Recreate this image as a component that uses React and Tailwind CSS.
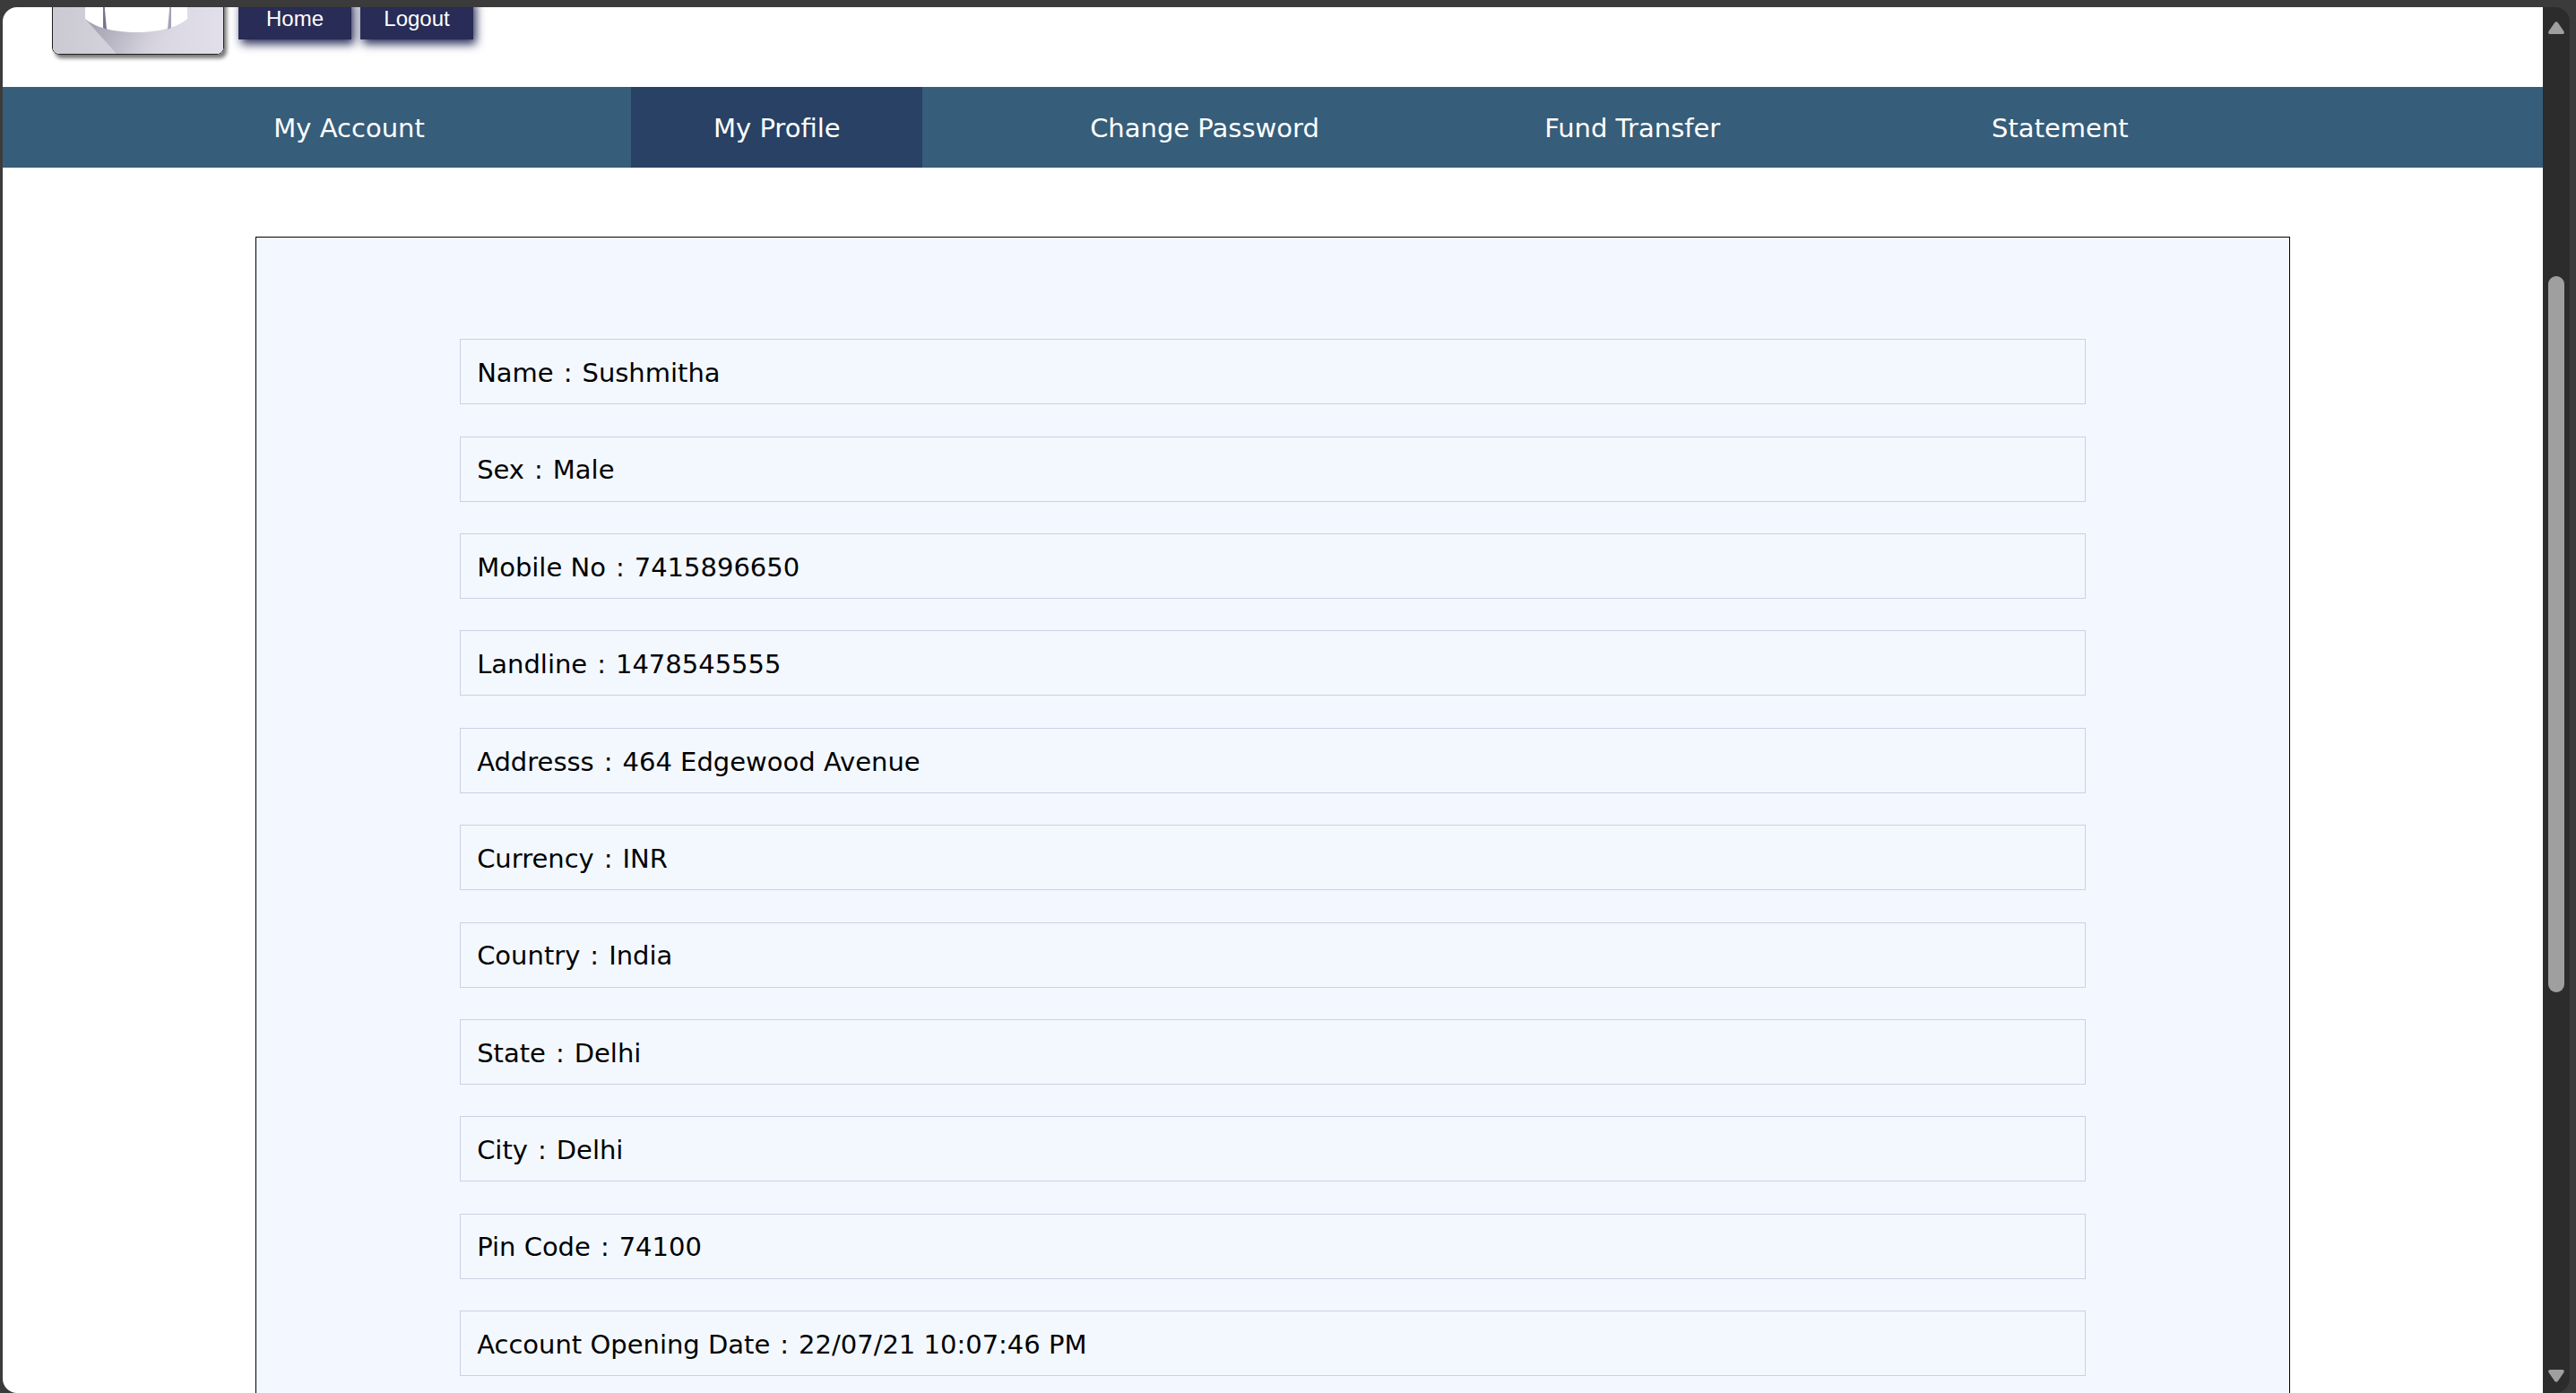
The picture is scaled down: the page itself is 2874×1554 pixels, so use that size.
const fields = [
  ["Name", "Sushmitha"],
  ["Sex", "Male"],
  ["Mobile No", "7415896650"],
  ["Landline", "1478545555"],
  ["Addresss", "464 Edgewood Avenue"],
  ["Currency", "INR"],
  ["Country", "India"],
  ["State", "Delhi"],
  ["City", "Delhi"],
  ["Pin Code", "74100"],
  ["Account Opening Date", "22/07/21 10:07:46 PM"],
];

const tabs = ["My Account", "My Profile", "Change Password", "Fund Transfer", "Statement"];

function Avatar() {
  return (
    <svg className="block h-[190px] w-full" viewBox="0 0 190 190" aria-hidden="true">
      <defs>
        <linearGradient id="back" x1="0" x2="1" y1="0" y2="0">
          <stop offset="0" stopColor="#cbcad3" />
          <stop offset="1" stopColor="#e2dfeb" />
        </linearGradient>
        <linearGradient id="shade" gradientUnits="userSpaceOnUse" x1="45" y1="150" x2="125" y2="195">
          <stop offset="0" stopColor="#a3a1b0" />
          <stop offset="0.5" stopColor="#c4c1ce" />
          <stop offset="1" stopColor="#dad7e3" stopOpacity="0" />
        </linearGradient>
      </defs>
      <rect width="190" height="190" fill="url(#back)" />
      <path d="M36 151 L71 190 H190 V130 H150 Z" fill="url(#shade)" />
      <path d="M36 110 V151 C58 171 128 171 150 151 V110 Z" fill="#ffffff" />
      <path d="M56 130 L56 161 L60 163 L57 130 Z" fill="#77748f" />
      <path d="M132 130 L132 161 L128 163 L131 130 Z" fill="#a5a2bb" />
    </svg>
  );
}

function HeaderButton({ children }) {
  return (
    <button className="h-[46px] w-[126px] bg-[#282c57] font-['Liberation_Sans',sans-serif] text-2xl text-white shadow-[3px_5px_10px_#282c57]">
      {children}
    </button>
  );
}

function Scrollbar() {
  return (
    <div className="flex w-[30px] shrink-0 flex-col items-center rounded-r-2xl bg-[#2c2c2c] pt-4 pb-3">
      <svg className="h-[14px] w-[18px]" viewBox="0 0 18 14" aria-hidden="true">
        <path d="M7 1.5Q9 -1 11 1.5L17.5 11Q18.5 14 16 14H2Q-0.5 14 0.5 11Z" fill="#9f9f9f" />
      </svg>
      <div className="flex w-full flex-1 flex-col items-center pt-[270px]">
        <div className="h-[65.5%] w-[18px] rounded-full bg-[#9f9f9f]" />
      </div>
      <svg className="h-[14px] w-[18px]" viewBox="0 0 18 14" aria-hidden="true">
        <path d="M7 12.5Q9 15 11 12.5L17.5 3Q18.5 0 16 0H2Q-0.5 0 0.5 3Z" fill="#9f9f9f" />
      </svg>
    </div>
  );
}

export default function App() {
  return (
    <div className="flex h-screen overflow-hidden bg-[#3b3b3b] pt-2 pr-[7px] pl-[3px] font-['DejaVu_Sans',sans-serif] text-[29px]">
      <div className="min-w-0 flex-1 overflow-hidden rounded-l-2xl bg-white">
        <header className="flex h-[89px] items-end gap-4 pb-9 pl-[55px]">
          <div className="w-[192px] shrink-0 overflow-hidden rounded-lg border border-[#222] shadow-[3px_4px_4px_#777]">
            <Avatar />
          </div>
          <div className="flex gap-[10px] pb-[17px]">
            <HeaderButton>Home</HeaderButton>
            <HeaderButton>Logout</HeaderButton>
          </div>
        </header>
        <nav className="grid h-[90px] grid-cols-5 bg-[#365d79] pr-[300px] pl-[148px]">
          {tabs.map((tab) => (
            <a
              key={tab}
              href="#"
              aria-current={tab === "My Profile" ? "page" : undefined}
              className="flex w-[325px] items-center justify-center justify-self-center pt-1 whitespace-nowrap text-white aria-[current=page]:bg-[#284165]"
            >
              {tab}
            </a>
          ))}
        </nav>
        <main className="mx-auto mt-[77px] box-content w-[80%] border border-black bg-[#f3f7ff]">
          <dl className="mx-auto w-[80%] pt-[5%] pb-[5%]">
            {fields.map(([label, value]) => (
              <div key={label} className="mb-[1.95%] flex h-[73px] items-center gap-[11px] border border-[#cbd1e5] bg-[#f3f8ff] px-[18px] pt-1 text-black">
                <dt className="flex gap-[11px]">
                  {label}
                  <span>:</span>
                </dt>
                <dd>{value}</dd>
              </div>
            ))}
          </dl>
        </main>
      </div>
      <Scrollbar />
    </div>
  );
}
